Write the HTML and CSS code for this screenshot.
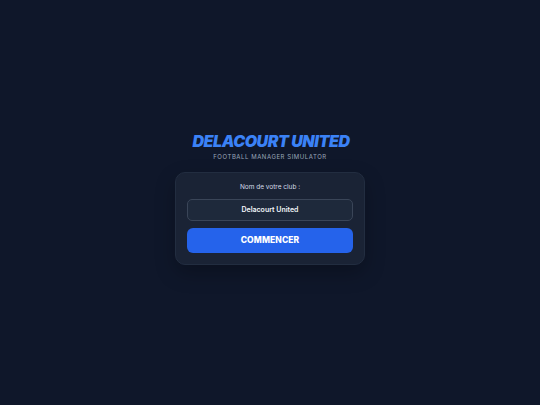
FILE: index.html
```html
<!DOCTYPE html>
<html lang="fr">
<head>
<meta charset="utf-8">
<title>Delacourt United</title>
<link rel="stylesheet" href="styles.css">
</head>
<body>
<main class="screen">
  <div class="intro">
    <h1 class="title">DELACOURT UNITED</h1>
    <p class="subtitle">FOOTBALL MANAGER SIMULATOR</p>
    <form class="card">
      <label class="label" for="club">Nom de votre club :</label>
      <input class="input" id="club" type="text" value="Delacourt United">
      <button class="button" type="button">COMMENCER</button>
    </form>
  </div>
</main>
</body>
</html>
```

FILE: styles.css
```css
* { box-sizing: border-box; }
html, body { margin: 0; padding: 0; }
body {
  background: #0f172a;
  font-family: Inter, "Liberation Sans", sans-serif;
  color: #e2e8f0;
}
.screen {
  min-height: 100vh;
  display: flex;
  align-items: center;
  justify-content: center;
}
.intro {
  display: flex;
  flex-direction: column;
  align-items: center;
  margin-top: -9px;
}
.title {
  margin: 0 0 0 2px;
  font-size: 16px;
  line-height: 18px;
  font-weight: 900;
  font-style: italic;
  letter-spacing: -0.45px;
  color: #3b82f6;
}
.subtitle {
  margin: 3px 0 0;
  font-size: 6px;
  line-height: 8px;
  letter-spacing: 0.55px;
  color: #9aa6b8;
}
.card {
  margin-top: 11px;
  width: 190px;
  padding: 10px 11px 11px;
  background: #1a2335;
  border: 1px solid #222d40;
  border-radius: 10px;
  display: flex;
  flex-direction: column;
  align-items: stretch;
  box-shadow: 0 8px 20px rgba(0,0,0,0.25);
}
.label {
  font-size: 6.5px;
  line-height: 8px;
  text-align: center;
  color: #d5dde8;
}
.input {
  margin-top: 8px;
  height: 22px;
  border: 1px solid #3a4558;
  border-radius: 5px;
  background: #1e293b;
  color: #f1f5f9;
  font-family: inherit;
  font-size: 7px;
  font-weight: 600;
  text-align: center;
  padding: 0;
  outline: none;
}
.button {
  margin-top: 7px;
  height: 25px;
  border: 0;
  border-radius: 6px;
  background: #2563eb;
  color: #ffffff;
  font-family: inherit;
  font-size: 8.5px;
  font-weight: 800;
  letter-spacing: 0.1px;
  padding: 0;
}
```
